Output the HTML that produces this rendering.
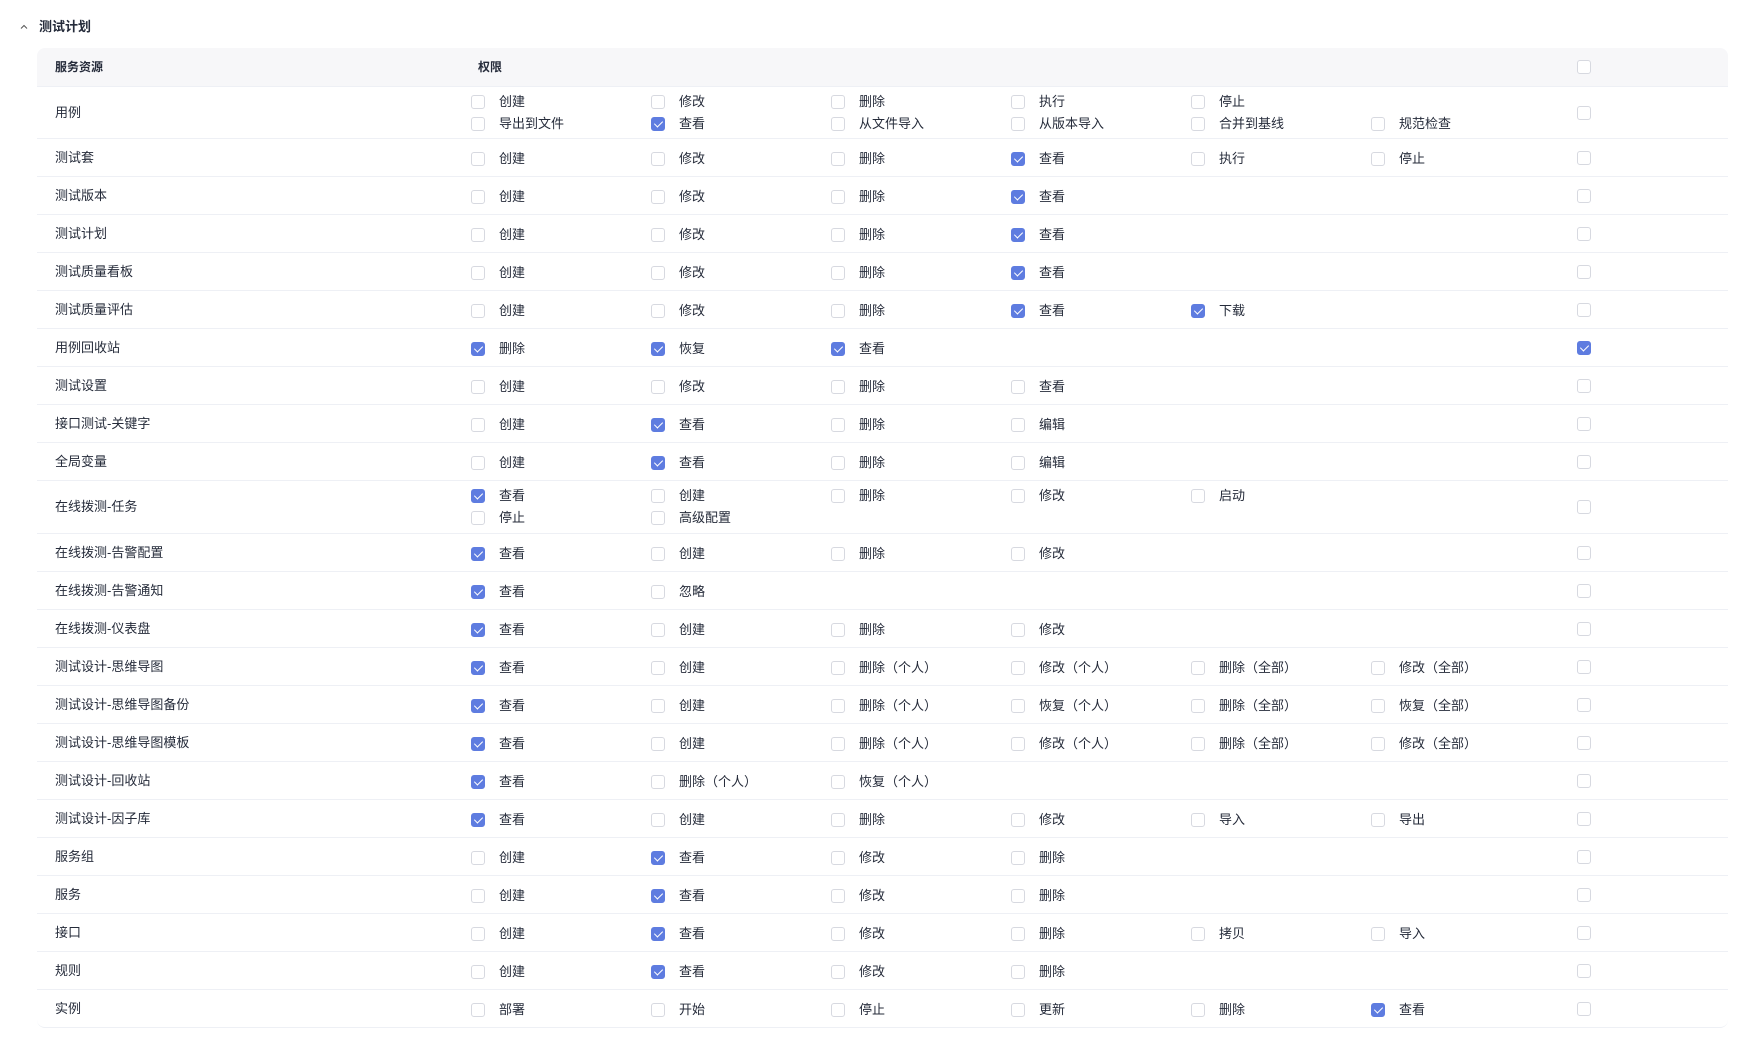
<!DOCTYPE html>
<html><head><meta charset="utf-8">
<style>
*{margin:0;padding:0;box-sizing:border-box}
body{width:1746px;height:1043px;background:#fff;font-family:"Liberation Sans","Noto Sans CJK SC",sans-serif;color:#252b3a;font-size:13px;position:relative;overflow:hidden}
.title{position:absolute;left:39px;top:18px;font-weight:bold;font-size:13px;line-height:18px}
.chev{position:absolute;left:20px;top:23px}
.tbl{position:absolute;left:37px;top:48px;width:1691px;height:980px;border-radius:8px;overflow:hidden;border-bottom:1px solid #eef0f5}
.hdr{position:absolute;left:0;top:0;width:100%;height:39px;background:#f7f7f9;border-bottom:1px solid #eef0f5}
.hdr span{position:absolute;top:10px;font-weight:bold;font-size:12px;line-height:18px}
.row{position:absolute;left:0;width:100%;border-bottom:1px solid #eef0f5}
.nm{position:absolute;left:18px;top:50%;transform:translateY(-50%);line-height:18px}
.perm{position:absolute;left:434px;top:0}
.ln{display:flex;height:20px;align-items:center}
.two .ln{height:22px}
.c{width:180px;display:flex;align-items:center;flex:none}
.cb{width:14px;height:14px;border:1px solid #d7d9e0;border-radius:3px;flex:none;background:#fff;position:relative}
.cb.on{background:#5e7ce0;border-color:#5e7ce0}
.cb.on:after{content:"";position:absolute;left:4px;top:1px;width:4px;height:7px;border:solid #fff;border-width:0 1.5px 1.5px 0;transform:rotate(45deg)}
.c span{margin-left:14px;line-height:18px}
.last{position:absolute;left:1540px;top:50%;margin-top:-7px}
</style></head><body>
<svg class="chev" width="8" height="8" viewBox="0 0 8 8"><path d="M1 5.5L4 2.5L7 5.5" fill="none" stroke="#555" stroke-width="1"/></svg>
<div class="title">测试计划</div>
<div class="tbl">
<div class="hdr"><span style="left:18px">服务资源</span><span style="left:441px">权限</span><div class="cb" style="position:absolute;left:1540px;top:12px"></div></div>

<div class="row" style="top:39px;height:52px"><div class="nm">用例</div><div class="perm two" style="top:4px">
<div class="ln"><div class="c"><i class="cb"></i><span>创建</span></div><div class="c"><i class="cb"></i><span>修改</span></div><div class="c"><i class="cb"></i><span>删除</span></div><div class="c"><i class="cb"></i><span>执行</span></div><div class="c"><i class="cb"></i><span>停止</span></div></div>
<div class="ln"><div class="c"><i class="cb"></i><span>导出到文件</span></div><div class="c"><i class="cb on"></i><span>查看</span></div><div class="c"><i class="cb"></i><span>从文件导入</span></div><div class="c"><i class="cb"></i><span>从版本导入</span></div><div class="c"><i class="cb"></i><span>合并到基线</span></div><div class="c"><i class="cb"></i><span>规范检查</span></div></div>
</div><i class="cb last"></i></div>

<div class="row" style="top:91px;height:38px"><div class="nm">测试套</div><div class="perm" style="top:10px"><div class="ln"><div class="c"><i class="cb"></i><span>创建</span></div><div class="c"><i class="cb"></i><span>修改</span></div><div class="c"><i class="cb"></i><span>删除</span></div><div class="c"><i class="cb on"></i><span>查看</span></div><div class="c"><i class="cb"></i><span>执行</span></div><div class="c"><i class="cb"></i><span>停止</span></div></div></div><i class="cb last"></i></div>

<div class="row" style="top:129px;height:38px"><div class="nm">测试版本</div><div class="perm" style="top:10px"><div class="ln"><div class="c"><i class="cb"></i><span>创建</span></div><div class="c"><i class="cb"></i><span>修改</span></div><div class="c"><i class="cb"></i><span>删除</span></div><div class="c"><i class="cb on"></i><span>查看</span></div></div></div><i class="cb last"></i></div>

<div class="row" style="top:167px;height:38px"><div class="nm">测试计划</div><div class="perm" style="top:10px"><div class="ln"><div class="c"><i class="cb"></i><span>创建</span></div><div class="c"><i class="cb"></i><span>修改</span></div><div class="c"><i class="cb"></i><span>删除</span></div><div class="c"><i class="cb on"></i><span>查看</span></div></div></div><i class="cb last"></i></div>

<div class="row" style="top:205px;height:38px"><div class="nm">测试质量看板</div><div class="perm" style="top:10px"><div class="ln"><div class="c"><i class="cb"></i><span>创建</span></div><div class="c"><i class="cb"></i><span>修改</span></div><div class="c"><i class="cb"></i><span>删除</span></div><div class="c"><i class="cb on"></i><span>查看</span></div></div></div><i class="cb last"></i></div>

<div class="row" style="top:243px;height:38px"><div class="nm">测试质量评估</div><div class="perm" style="top:10px"><div class="ln"><div class="c"><i class="cb"></i><span>创建</span></div><div class="c"><i class="cb"></i><span>修改</span></div><div class="c"><i class="cb"></i><span>删除</span></div><div class="c"><i class="cb on"></i><span>查看</span></div><div class="c"><i class="cb on"></i><span>下载</span></div></div></div><i class="cb last"></i></div>

<div class="row" style="top:281px;height:38px"><div class="nm">用例回收站</div><div class="perm" style="top:10px"><div class="ln"><div class="c"><i class="cb on"></i><span>删除</span></div><div class="c"><i class="cb on"></i><span>恢复</span></div><div class="c"><i class="cb on"></i><span>查看</span></div></div></div><i class="cb on last"></i></div>

<div class="row" style="top:319px;height:38px"><div class="nm">测试设置</div><div class="perm" style="top:10px"><div class="ln"><div class="c"><i class="cb"></i><span>创建</span></div><div class="c"><i class="cb"></i><span>修改</span></div><div class="c"><i class="cb"></i><span>删除</span></div><div class="c"><i class="cb"></i><span>查看</span></div></div></div><i class="cb last"></i></div>

<div class="row" style="top:357px;height:38px"><div class="nm">接口测试-关键字</div><div class="perm" style="top:10px"><div class="ln"><div class="c"><i class="cb"></i><span>创建</span></div><div class="c"><i class="cb on"></i><span>查看</span></div><div class="c"><i class="cb"></i><span>删除</span></div><div class="c"><i class="cb"></i><span>编辑</span></div></div></div><i class="cb last"></i></div>

<div class="row" style="top:395px;height:38px"><div class="nm">全局变量</div><div class="perm" style="top:10px"><div class="ln"><div class="c"><i class="cb"></i><span>创建</span></div><div class="c"><i class="cb on"></i><span>查看</span></div><div class="c"><i class="cb"></i><span>删除</span></div><div class="c"><i class="cb"></i><span>编辑</span></div></div></div><i class="cb last"></i></div>

<div class="row" style="top:433px;height:53px"><div class="nm">在线拨测-任务</div><div class="perm two" style="top:4px">
<div class="ln"><div class="c"><i class="cb on"></i><span>查看</span></div><div class="c"><i class="cb"></i><span>创建</span></div><div class="c"><i class="cb"></i><span>删除</span></div><div class="c"><i class="cb"></i><span>修改</span></div><div class="c"><i class="cb"></i><span>启动</span></div></div>
<div class="ln"><div class="c"><i class="cb"></i><span>停止</span></div><div class="c"><i class="cb"></i><span>高级配置</span></div></div>
</div><i class="cb last"></i></div>

<div class="row" style="top:486px;height:38px"><div class="nm">在线拨测-告警配置</div><div class="perm" style="top:10px"><div class="ln"><div class="c"><i class="cb on"></i><span>查看</span></div><div class="c"><i class="cb"></i><span>创建</span></div><div class="c"><i class="cb"></i><span>删除</span></div><div class="c"><i class="cb"></i><span>修改</span></div></div></div><i class="cb last"></i></div>

<div class="row" style="top:524px;height:38px"><div class="nm">在线拨测-告警通知</div><div class="perm" style="top:10px"><div class="ln"><div class="c"><i class="cb on"></i><span>查看</span></div><div class="c"><i class="cb"></i><span>忽略</span></div></div></div><i class="cb last"></i></div>

<div class="row" style="top:562px;height:38px"><div class="nm">在线拨测-仪表盘</div><div class="perm" style="top:10px"><div class="ln"><div class="c"><i class="cb on"></i><span>查看</span></div><div class="c"><i class="cb"></i><span>创建</span></div><div class="c"><i class="cb"></i><span>删除</span></div><div class="c"><i class="cb"></i><span>修改</span></div></div></div><i class="cb last"></i></div>

<div class="row" style="top:600px;height:38px"><div class="nm">测试设计-思维导图</div><div class="perm" style="top:10px"><div class="ln"><div class="c"><i class="cb on"></i><span>查看</span></div><div class="c"><i class="cb"></i><span>创建</span></div><div class="c"><i class="cb"></i><span>删除（个人）</span></div><div class="c"><i class="cb"></i><span>修改（个人）</span></div><div class="c"><i class="cb"></i><span>删除（全部）</span></div><div class="c"><i class="cb"></i><span>修改（全部）</span></div></div></div><i class="cb last"></i></div>

<div class="row" style="top:638px;height:38px"><div class="nm">测试设计-思维导图备份</div><div class="perm" style="top:10px"><div class="ln"><div class="c"><i class="cb on"></i><span>查看</span></div><div class="c"><i class="cb"></i><span>创建</span></div><div class="c"><i class="cb"></i><span>删除（个人）</span></div><div class="c"><i class="cb"></i><span>恢复（个人）</span></div><div class="c"><i class="cb"></i><span>删除（全部）</span></div><div class="c"><i class="cb"></i><span>恢复（全部）</span></div></div></div><i class="cb last"></i></div>

<div class="row" style="top:676px;height:38px"><div class="nm">测试设计-思维导图模板</div><div class="perm" style="top:10px"><div class="ln"><div class="c"><i class="cb on"></i><span>查看</span></div><div class="c"><i class="cb"></i><span>创建</span></div><div class="c"><i class="cb"></i><span>删除（个人）</span></div><div class="c"><i class="cb"></i><span>修改（个人）</span></div><div class="c"><i class="cb"></i><span>删除（全部）</span></div><div class="c"><i class="cb"></i><span>修改（全部）</span></div></div></div><i class="cb last"></i></div>

<div class="row" style="top:714px;height:38px"><div class="nm">测试设计-回收站</div><div class="perm" style="top:10px"><div class="ln"><div class="c"><i class="cb on"></i><span>查看</span></div><div class="c"><i class="cb"></i><span>删除（个人）</span></div><div class="c"><i class="cb"></i><span>恢复（个人）</span></div></div></div><i class="cb last"></i></div>

<div class="row" style="top:752px;height:38px"><div class="nm">测试设计-因子库</div><div class="perm" style="top:10px"><div class="ln"><div class="c"><i class="cb on"></i><span>查看</span></div><div class="c"><i class="cb"></i><span>创建</span></div><div class="c"><i class="cb"></i><span>删除</span></div><div class="c"><i class="cb"></i><span>修改</span></div><div class="c"><i class="cb"></i><span>导入</span></div><div class="c"><i class="cb"></i><span>导出</span></div></div></div><i class="cb last"></i></div>

<div class="row" style="top:790px;height:38px"><div class="nm">服务组</div><div class="perm" style="top:10px"><div class="ln"><div class="c"><i class="cb"></i><span>创建</span></div><div class="c"><i class="cb on"></i><span>查看</span></div><div class="c"><i class="cb"></i><span>修改</span></div><div class="c"><i class="cb"></i><span>删除</span></div></div></div><i class="cb last"></i></div>

<div class="row" style="top:828px;height:38px"><div class="nm">服务</div><div class="perm" style="top:10px"><div class="ln"><div class="c"><i class="cb"></i><span>创建</span></div><div class="c"><i class="cb on"></i><span>查看</span></div><div class="c"><i class="cb"></i><span>修改</span></div><div class="c"><i class="cb"></i><span>删除</span></div></div></div><i class="cb last"></i></div>

<div class="row" style="top:866px;height:38px"><div class="nm">接口</div><div class="perm" style="top:10px"><div class="ln"><div class="c"><i class="cb"></i><span>创建</span></div><div class="c"><i class="cb on"></i><span>查看</span></div><div class="c"><i class="cb"></i><span>修改</span></div><div class="c"><i class="cb"></i><span>删除</span></div><div class="c"><i class="cb"></i><span>拷贝</span></div><div class="c"><i class="cb"></i><span>导入</span></div></div></div><i class="cb last"></i></div>

<div class="row" style="top:904px;height:38px"><div class="nm">规则</div><div class="perm" style="top:10px"><div class="ln"><div class="c"><i class="cb"></i><span>创建</span></div><div class="c"><i class="cb on"></i><span>查看</span></div><div class="c"><i class="cb"></i><span>修改</span></div><div class="c"><i class="cb"></i><span>删除</span></div></div></div><i class="cb last"></i></div>

<div class="row" style="top:942px;height:38px;border-bottom:none"><div class="nm">实例</div><div class="perm" style="top:10px"><div class="ln"><div class="c"><i class="cb"></i><span>部署</span></div><div class="c"><i class="cb"></i><span>开始</span></div><div class="c"><i class="cb"></i><span>停止</span></div><div class="c"><i class="cb"></i><span>更新</span></div><div class="c"><i class="cb"></i><span>删除</span></div><div class="c"><i class="cb on"></i><span>查看</span></div></div></div><i class="cb last"></i></div>
</div>
</body></html>
